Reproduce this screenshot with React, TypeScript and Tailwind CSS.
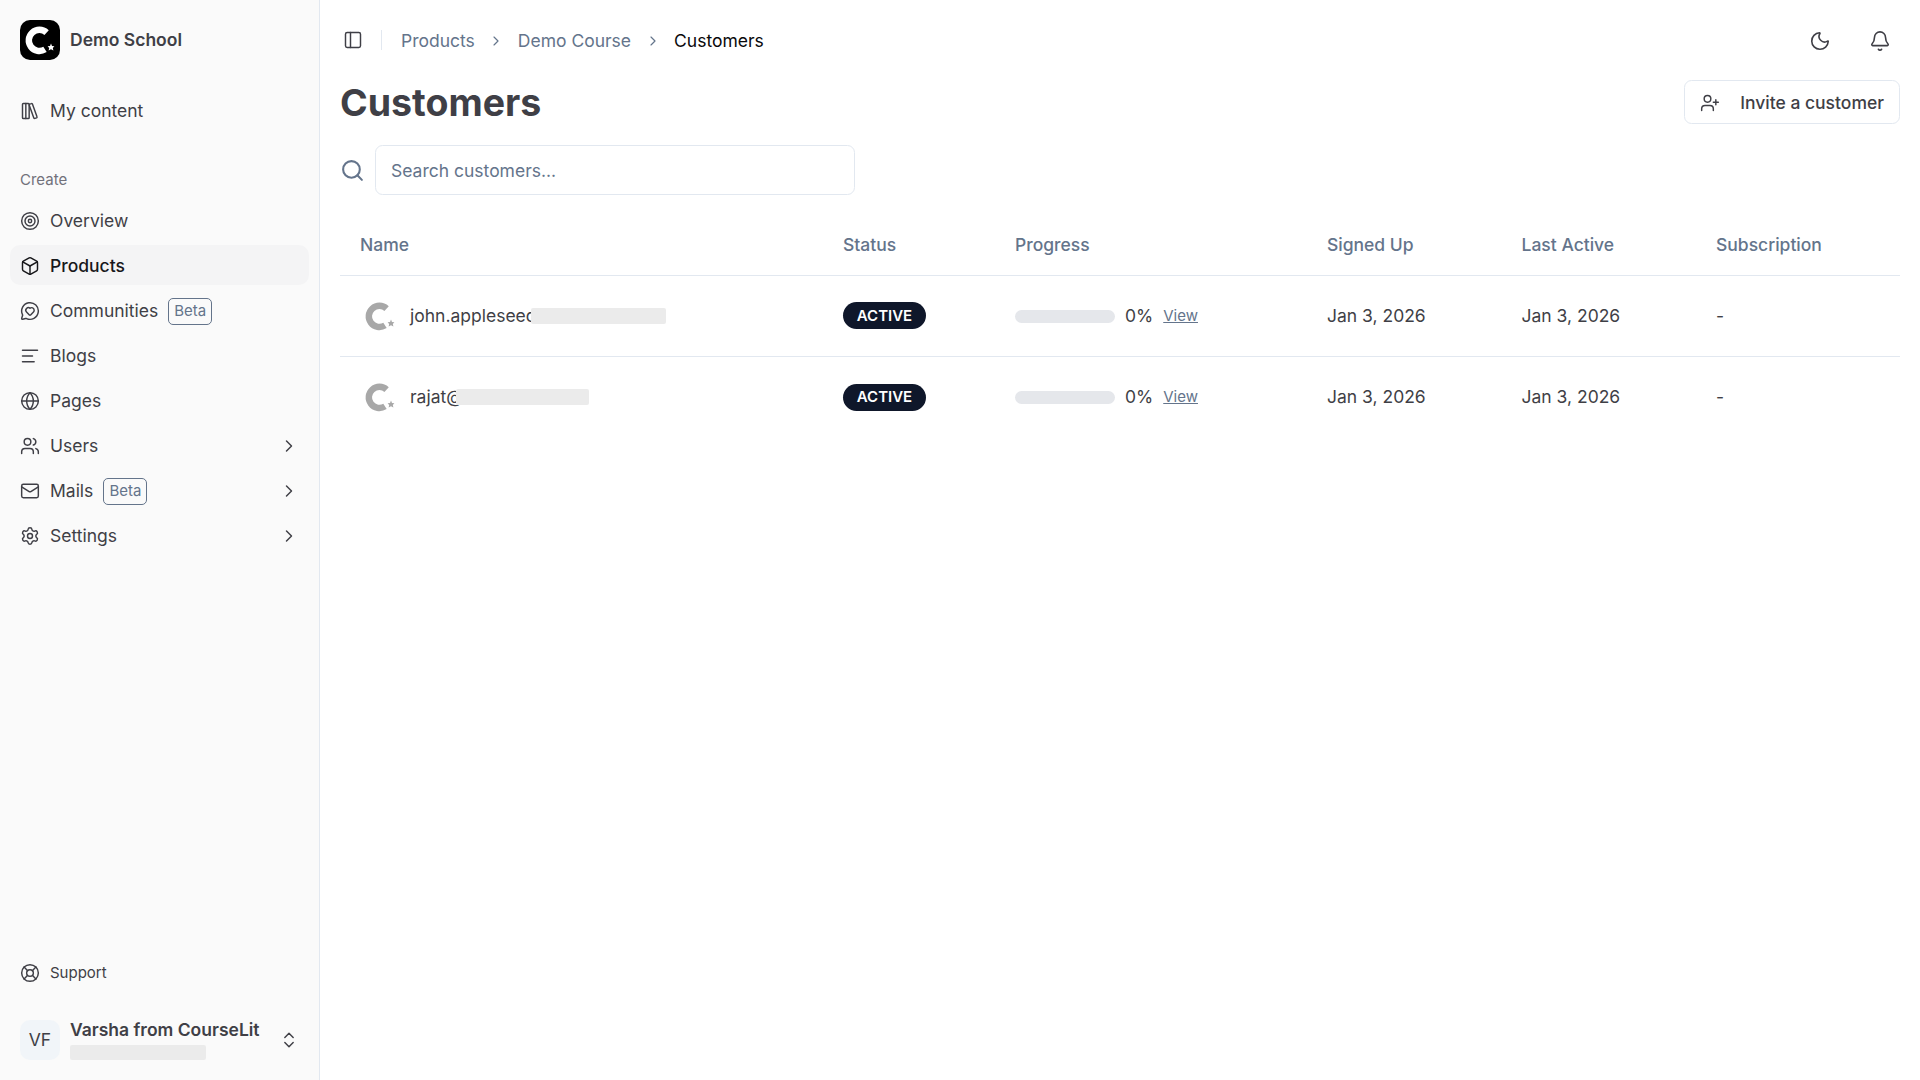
import {
  AlignLeft,
  Bell,
  Box,
  ChevronRight,
  ChevronsUpDown,
  Globe,
  LibraryBig,
  LifeBuoy,
  Mail,
  MessageCircleHeart,
  Moon,
  PanelLeft,
  Search,
  Settings,
  Target,
  UserPlus,
  Users,
} from 'lucide-react'

const Logo = ({ className, fg }: { className: string; fg: string }) => (
  <svg viewBox="0 0 40 40" className={className}>
    <path d="M26.6 12.6 A10.6 10.6 0 1 0 25 29.4" fill="none" stroke={fg} strokeWidth="6.4" />
    <polygon
      points="31,23.6 32,26 34.4,26.2 32.8,28 33.4,30.4 31,29.2 28.6,30.4 29.2,28 27.6,26.2 30,26"
      fill={fg}
    />
  </svg>
)

const Beta = () => (
  <span className="ml-[10px] flex h-[27px] w-[44px] items-center justify-center rounded-[5px] border border-[#64748b] text-[15px] text-[#64748b]">
    Beta
  </span>
)

const NavItem = ({
  icon: Icon,
  label,
  beta,
  arrow,
  active,
}: {
  icon: typeof Box
  label: string
  beta?: boolean
  arrow?: boolean
  active?: boolean
}) => (
  <div
    className={`flex h-[40px] items-center rounded-[10px] px-[10px] pt-[2px] text-[17.5px] ${
      active ? 'bg-[#f4f4f5] font-medium text-[#18181b]' : 'text-[#3f3f46]'
    }`}
  >
    <Icon size={20} strokeWidth={1.75} className="mr-[10px] shrink-0" />
    <span>{label}</span>
    {beta && <Beta />}
    {arrow && <ChevronRight size={20} strokeWidth={1.75} className="ml-auto" />}
  </div>
)

const customers = [
  { name: 'john.appleseed', mask: 'ml-[-6px] w-[135px]' },
  { name: 'rajat@', mask: 'ml-[-7px] w-[133px]' },
]

export default function App() {
  return (
    <div className="flex h-[1080px] w-[1920px] overflow-hidden bg-white font-['Inter',sans-serif] text-[#3f3f46]">
      <aside className="flex w-[320px] shrink-0 flex-col border-r border-[#e2e8f0] bg-[#fafafa] px-[10px]">
        <div className="flex h-[80px] items-center pl-[10px]">
          <div className="flex h-[40px] w-[40px] items-center justify-center rounded-[10px] bg-black">
            <Logo className="h-[40px] w-[40px]" fg="#ffffff" />
          </div>
          <span className="ml-[10px] text-[17.5px] font-semibold">Demo School</span>
        </div>
        <div className="mt-[10px]">
          <NavItem icon={LibraryBig} label="My content" />
        </div>
        <div className="mt-[30px] flex h-[40px] items-center px-[10px] text-[15px] text-[#71717a]">Create</div>
        <div className="flex flex-col gap-[5px]">
          <NavItem icon={Target} label="Overview" />
          <NavItem icon={Box} label="Products" active />
          <NavItem icon={MessageCircleHeart} label="Communities" beta />
          <NavItem icon={AlignLeft} label="Blogs" />
          <NavItem icon={Globe} label="Pages" />
          <NavItem icon={Users} label="Users" arrow />
          <NavItem icon={Mail} label="Mails" beta arrow />
          <NavItem icon={Settings} label="Settings" arrow />
        </div>
        <div className="mt-auto flex h-[40px] items-center px-[10px] text-[15px]">
          <LifeBuoy size={20} strokeWidth={1.75} className="mr-[10px]" />
          Support
        </div>
        <div className="mb-[10px] mt-[17px] flex h-[60px] items-center px-[10px]">
          <div className="flex h-[40px] w-[40px] items-center justify-center rounded-[10px] bg-[#f1f5f9] text-[17.5px]">
            VF
          </div>
          <div className="ml-[10px] flex-1 pb-[2px]">
            <div className="text-[17.5px] font-semibold leading-[22px]">Varsha from CourseLit</div>
            <div className="mt-[4px] h-[15px] w-[136px] rounded-[2px] bg-[#ebebeb]" />
          </div>
          <ChevronsUpDown size={20} strokeWidth={1.75} />
        </div>
      </aside>

      <main className="flex min-w-0 flex-1 flex-col px-[20px]">
        <header className="flex h-[80px] items-center">
          <PanelLeft size={20} strokeWidth={1.75} className="ml-[3px]" />
          <div className="ml-[18px] mr-[19px] h-[20px] w-px bg-[#e2e8f0]" />
          <nav className="flex items-center pt-[2px] text-[17.5px] text-[#64748b]">
            <span>Products</span>
            <ChevronRight size={16} strokeWidth={1.75} className="mx-[13.5px]" />
            <span>Demo Course</span>
            <ChevronRight size={16} strokeWidth={1.75} className="mx-[13.5px]" />
            <span className="text-[#09090b]">Customers</span>
          </nav>
          <div className="ml-auto flex items-center gap-[38px] pr-[9px] pt-[1px]">
            <Moon size={22} strokeWidth={1.75} />
            <Bell size={22} strokeWidth={1.75} />
          </div>
        </header>

        <div className="flex h-[46px] items-center justify-between">
          <h1 className="text-[37.5px] font-bold leading-none">Customers</h1>
          <button className="flex h-[44px] items-center self-start rounded-[7.5px] border border-[#e2e8f0] bg-white pl-[15px] pr-[15px] pt-[2px] text-[17.5px] font-medium">
            <UserPlus size={20} strokeWidth={1.75} className="mr-[20px]" />
            Invite a customer
          </button>
        </div>

        <div className="mt-[19px] flex items-center">
          <Search size={25} strokeWidth={2} className="text-[#64748b]" />
          <input
            placeholder="Search customers..."
            className="ml-[10px] h-[50px] w-[480px] rounded-[7.5px] border border-[#e2e8f0] bg-white px-[15px] text-[17.5px] outline-none placeholder:text-[#64748b]"
          />
        </div>

        <table className="mt-[20px] w-[1560px] table-fixed border-collapse text-left text-[17.5px]">
          <thead>
            <tr className="h-[60px] border-b border-[#e2e8f0] text-[#64748b]">
              <th className="w-[483px] pl-[20px] font-medium">Name</th>
              <th className="w-[172px] pl-[20px] font-medium">Status</th>
              <th className="w-[312px] pl-[20px] font-medium">Progress</th>
              <th className="w-[194.5px] pl-[20px] font-medium">Signed Up</th>
              <th className="w-[194.5px] pl-[20px] font-medium">Last Active</th>
              <th className="w-[204px] pl-[20px] font-medium">Subscription</th>
            </tr>
          </thead>
          <tbody>
            {customers.map((c, i) => (
              <tr key={c.name} className={`h-[81px] ${i === 0 ? 'border-b border-[#e2e8f0]' : ''}`}>
                <td className="pl-[20px] pt-[1px]">
                  <div className="flex items-center">
                    <Logo className="h-[40px] w-[40px] shrink-0" fg="#a8a8a8" />
                    <span className="ml-[10px]">{c.name}</span>
                    <div className={`h-[16px] rounded-[2px] bg-[#ebebeb] ${c.mask}`} />
                  </div>
                </td>
                <td className="pl-[20px]">
                  <span className="inline-flex h-[27px] w-[83px] items-center justify-center rounded-full bg-[#0f172a] text-[15px] font-semibold text-white">
                    ACTIVE
                  </span>
                </td>
                <td className="pl-[20px] pt-[1px]">
                  <div className="flex items-center">
                    <div className="h-[13px] w-[100px] rounded-full bg-[#e5e7eb]" />
                    <span className="ml-[10px]">0%</span>
                    <a className="ml-[10px] text-[15px] text-[#64748b] underline">View</a>
                  </div>
                </td>
                <td className="pl-[20px] pt-[1px]">Jan 3, 2026</td>
                <td className="pl-[20px] pt-[1px]">Jan 3, 2026</td>
                <td className="pl-[20px] pt-[1px]">-</td>
              </tr>
            ))}
          </tbody>
        </table>
      </main>
    </div>
  )
}
